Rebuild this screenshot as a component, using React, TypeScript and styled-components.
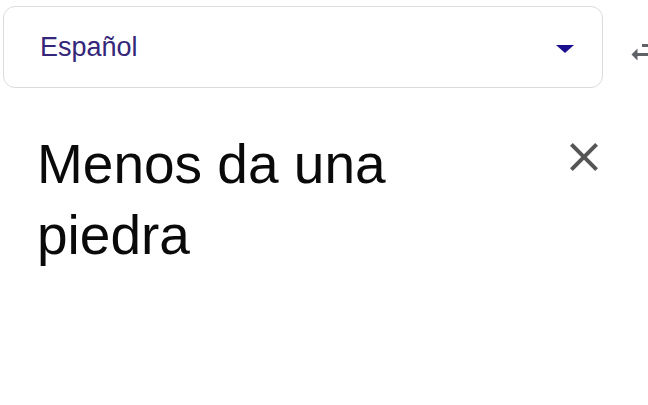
import React from 'react';
import styled, { createGlobalStyle } from 'styled-components';

const GlobalStyle = createGlobalStyle`
  html, body {
    margin: 0;
    padding: 0;
    background: #ffffff;
    overflow: hidden;
  }
  body {
    font-family: 'Liberation Sans', Arial, sans-serif;
  }
`;

const Page = styled.div`
  width: 648px;
  height: 405px;
  display: flex;
  flex-direction: column;
`;

const TopBar = styled.div`
  display: flex;
  align-items: center;
  padding: 6px 0 0 3px;
  gap: 24px;
`;

const LangSelect = styled.div`
  box-sizing: border-box;
  width: 600px;
  height: 82px;
  flex-shrink: 0;
  border: 1px solid #dadce0;
  border-radius: 12px;
  display: flex;
  align-items: center;
  justify-content: space-between;
  padding: 0 28px 0 36px;
`;

const LangLabel = styled.span`
  font-size: 27px;
  color: #35267a;
  line-height: 1;
  margin-top: 1px;
`;

const Caret = styled.span`
  width: 0;
  height: 0;
  border-left: 9px solid transparent;
  border-right: 9px solid transparent;
  border-top: 8px solid #1c0f8f;
  margin-top: 4px;
`;

const IconButton = styled.button`
  flex-shrink: 0;
  padding: 0;
  border: none;
  background: none;
  display: flex;
  color: #5f6368;
`;

const SwapButton = styled(IconButton)`
  margin-top: 5px;
`;

const InputArea = styled.div`
  display: flex;
  align-items: flex-start;
  justify-content: space-between;
  padding: 41px 40px 0 37px;
`;

const SourceText = styled.div`
  font-size: 55px;
  line-height: 71px;
  color: #0a0a0a;
  width: 420px;
`;

const CloseButton = styled(IconButton)`
  margin-top: 4px;
  color: #555555;
`;

const SwapIcon = () => (
  <svg width="36" height="36" viewBox="0 0 24 24" fill="currentColor">
    <path d="M6.99 11L3 15l3.99 4v-3H14v-2H6.99v-3zM21 9l-3.99-4v3H10v2h7.01v3L21 9z" />
  </svg>
);

const CloseIcon = () => (
  <svg width="48" height="48" viewBox="0 0 24 24" fill="currentColor">
    <path d="M19 6.41L17.59 5 12 10.59 6.41 5 5 6.41 10.59 12 5 17.59 6.41 19 12 13.41 17.59 19 19 17.59 13.41 12z" />
  </svg>
);

export default function App() {
  return (
    <Page>
      <GlobalStyle />
      <TopBar>
        <LangSelect>
          <LangLabel>Español</LangLabel>
          <Caret />
        </LangSelect>
        <SwapButton aria-label="Intercambiar idiomas">
          <SwapIcon />
        </SwapButton>
      </TopBar>
      <InputArea>
        <SourceText>Menos da una piedra</SourceText>
        <CloseButton aria-label="Borrar texto">
          <CloseIcon />
        </CloseButton>
      </InputArea>
    </Page>
  );
}
